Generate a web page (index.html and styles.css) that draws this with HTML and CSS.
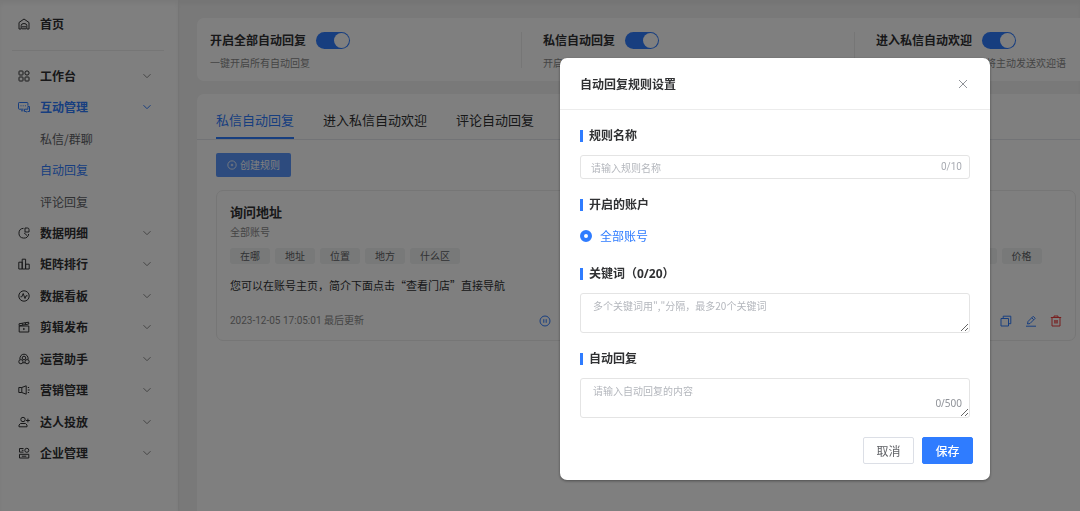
FILE: index.html
```html
<!DOCTYPE html>
<html lang="zh-CN">
<head>
<meta charset="utf-8">
<title>自动回复</title>
<link rel="stylesheet" href="styles.css">
</head>
<body>
<svg class="sprite" aria-hidden="true">
  <symbol id="chevron" viewBox="0 0 10 10"><path d="M1.500 3.200 5 6.700l3.500-3.500"/></symbol>
  <symbol id="pause" viewBox="0 0 12 12"><circle cx="6" cy="6" r="5"/><path d="M4.800 4.200v3.600M7.200 4.200v3.600"/></symbol>
  <symbol id="copy" viewBox="0 0 12 12"><path d="M1 3.500h7.500V11H1zM3.200 3.500V1.200h7.600v7.500H8.500"/></symbol>
  <symbol id="edit" viewBox="0 0 12 12"><path d="M1 11.200h10M2.500 9l.5-2.500 5.200-5.200 2 2L5 8.500zM6.800 2.800l2 2"/></symbol>
  <symbol id="trash" viewBox="0 0 12 12"><path d="M.8 2.500h10.400M4 2.300V1h4v1.300M2 2.500V11h8V2.500M4.800 5v3.500M7.200 5v3.500M6 5v3.500"/></symbol>
</svg>

<div class="app">
  <aside class="sidebar">
    <a class="home" href="#">
      <svg class="icon" viewBox="0 0 12 12"><path d="M1 11V4.500L6 1l5 3.500V11H8.800V7.500a2.800 2 0 0 0-5.600 0V11zM4 8.800h4M4 10.800h4"/></svg>
      首页
    </a>
    <nav class="menu" aria-label="主菜单">
      <button class="item" type="button"><svg class="icon" viewBox="0 0 12 12"><rect x="1" y="1" width="4" height="4" rx=".6"/><rect x="1" y="7" width="4" height="4" rx=".6"/><rect x="7" y="7" width="4" height="4" rx=".6"/><circle cx="9" cy="3" r="2.100"/></svg>工作台<svg class="arrow"><use href="#chevron"/></svg></button>
      <button class="item active" type="button"><svg class="icon" viewBox="0 0 12 12"><path d="M5.500 8.200H1.200a.7.7 0 0 1-.7-.7V2.200a.7.7 0 0 1 .7-.7h8a.7.7 0 0 1 .7.700v2.500M2.500 4.800h1M4.700 4.800h1M6.900 4.800h1M3 9.800h2.500M9.900 5.500h1.600v5H9.800l-.8.800-.8-.8H6.500V8.200h3.400z"/></svg>互动管理<svg class="arrow"><use href="#chevron"/></svg></button>
      <a class="item sub" href="#">私信/群聊</a>
      <a class="item sub active" href="#">自动回复</a>
      <a class="item sub" href="#">评论回复</a>
      <button class="item" type="button"><svg class="icon" viewBox="0 0 12 12"><path d="M5.500 1.300A4.900 4.900 0 1 0 10.700 7M6 5.800 9 8.500M7 1h2.500a1.500 1.500 0 0 1 1.500 1.500V5H7z"/></svg>数据明细<svg class="arrow"><use href="#chevron"/></svg></button>
      <button class="item" type="button"><svg class="icon" viewBox="0 0 12 12"><path d="M.8 4.200h3.400V11H.8zM4.200 1.200h3.400V11H4.200zM7.600 6.200h3.600V11H7.600z"/></svg>矩阵排行<svg class="arrow"><use href="#chevron"/></svg></button>
      <button class="item" type="button"><svg class="icon" viewBox="0 0 12 12"><circle cx="6" cy="6" r="5.200"/><path d="M2.500 6.800h1.300L5.200 3.500l1.800 5 1-2.700h1.500"/></svg>数据看板<svg class="arrow"><use href="#chevron"/></svg></button>
      <button class="item" type="button"><svg class="icon" viewBox="0 0 12 12"><path d="M1.200 5h9.600v6H1.200zM1 2.800l9.600-1.600.2 1.800L1.200 4.800zM4 2.200l1 1.800M7 1.700l1 1.800"/><path d="M5.200 6.800v2.500L7.300 8z" fill="currentColor" stroke="none"/></svg>剪辑发布<svg class="arrow"><use href="#chevron"/></svg></button>
      <button class="item" type="button"><svg class="icon" viewBox="0 0 12 12"><circle cx="2.900" cy="8.700" r="2.100"/><circle cx="9.100" cy="8.700" r="2.100"/><circle cx="6" cy="5" r="1.800"/><path d="M1.800 6.500C1.800 3 3.500 1.200 6 1.200S10.200 3 10.200 6.500M5 9.800h2"/></svg>运营助手<svg class="arrow"><use href="#chevron"/></svg></button>
      <button class="item" type="button"><svg class="icon" viewBox="0 0 12 12"><path d="M.8 3.500h3v5h-3zM3.800 3.500l4.400-1.700v8.400L3.800 8.500M9.800 3.500h1.300M9.800 6h1.900M9.800 8.500h1.300"/></svg>营销管理<svg class="arrow"><use href="#chevron"/></svg></button>
      <button class="item" type="button"><svg class="icon" viewBox="0 0 12 12"><circle cx="5" cy="3.500" r="2.200"/><path d="M1 10.800V9l1.500-1.500h5L9 9v1.800zM8 4.500h3.800M9.900 2.600v3.800"/></svg>达人投放<svg class="arrow"><use href="#chevron"/></svg></button>
      <button class="item" type="button"><svg class="icon" viewBox="0 0 12 12"><path d="M5.500 1.500h-4v3.600h4M5.500 3.300H3.800M1.500 11V7.300h9.300V11zM3.800 9.200h4.500"/><circle cx="8.800" cy="3.300" r="2"/></svg>企业管理<svg class="arrow"><use href="#chevron"/></svg></button>
    </nav>
  </aside>

  <main class="main">
    <section class="switches">
      <div class="option">
        <label class="option-head">开启全部自动回复<input class="switch" type="checkbox" role="switch" checked></label>
        <p>一键开启所有自动回复</p>
      </div>
      <div class="option">
        <label class="option-head">私信自动回复<input class="switch" type="checkbox" role="switch" checked></label>
        <p>开启后，自动回复私信</p>
      </div>
      <div class="option">
        <label class="option-head">进入私信自动欢迎<input class="switch" type="checkbox" role="switch" checked></label>
        <p>开启后，用户进入私信时将主动发送欢迎语</p>
      </div>
    </section>

    <section class="panel">
      <div class="tabs" role="tablist">
        <button class="tab selected" role="tab" aria-selected="true" type="button">私信自动回复</button>
        <button class="tab" role="tab" aria-selected="false" type="button">进入私信自动欢迎</button>
        <button class="tab" role="tab" aria-selected="false" type="button">评论自动回复</button>
      </div>
      <div class="panel-body">
        <button class="create" type="button"><svg class="glyph" viewBox="0 0 12 12"><circle cx="6" cy="6" r="5"/><path d="M6 4.500v3M4.500 6h3"/></svg>创建规则</button>
        <div class="rules">
          <article class="rule">
            <h2>询问地址</h2>
            <p class="account">全部账号</p>
            <ul class="tags"><li>在哪</li><li>地址</li><li>位置</li><li>地方</li><li>什么区</li></ul>
            <p class="reply">您可以在账号主页，简介下面点击“查看门店”直接导航</p>
            <footer class="rule-foot">
              <time>2023-12-05 17:05:01 最后更新</time>
              <button type="button" aria-label="暂停"><svg class="glyph"><use href="#pause"/></svg></button>
              <button type="button" aria-label="复制"><svg class="glyph"><use href="#copy"/></svg></button>
              <button type="button" aria-label="编辑"><svg class="glyph"><use href="#edit"/></svg></button>
              <button class="danger" type="button" aria-label="删除"><svg class="glyph"><use href="#trash"/></svg></button>
            </footer>
          </article>
          <article class="rule">
            <h2>询问价格</h2>
            <p class="account">全部账号</p>
            <ul class="tags"><li>多少钱</li><li>怎么卖</li><li>报价</li><li>费用</li><li>收费</li><li>优惠</li><li>套餐</li><li>价格</li></ul>
            <p class="reply">您可以在账号主页查看价格</p>
            <footer class="rule-foot">
              <time>2023-12-05 17:05:01 最后更新</time>
              <button type="button" aria-label="暂停"><svg class="glyph"><use href="#pause"/></svg></button>
              <button type="button" aria-label="复制"><svg class="glyph"><use href="#copy"/></svg></button>
              <button type="button" aria-label="编辑"><svg class="glyph"><use href="#edit"/></svg></button>
              <button class="danger" type="button" aria-label="删除"><svg class="glyph"><use href="#trash"/></svg></button>
            </footer>
          </article>
        </div>
      </div>
    </section>
  </main>
</div>

<div class="overlay">
  <form class="dialog" role="dialog" aria-modal="true" aria-labelledby="dialog-title">
    <header class="dialog-head">
      <h1 id="dialog-title">自动回复规则设置</h1>
      <button class="close" type="button" aria-label="关闭"><svg viewBox="0 0 10 10"><path d="M1 1l8 8M9 1 1 9"/></svg></button>
    </header>
    <div class="dialog-body">
      <div class="field">
        <label class="title" for="name">规则名称</label>
        <div class="box"><input id="name" type="text" maxlength="10" placeholder="请输入规则名称"><span class="count">0/10</span></div>
      </div>
      <fieldset class="field">
        <legend class="title">开启的账户</legend>
        <label class="choice"><input type="radio" name="account" checked>全部账号</label>
      </fieldset>
      <div class="field">
        <label class="title" for="keywords">关键词（0/20）</label>
        <div class="box"><textarea id="keywords" placeholder="多个关键词用&quot;,&quot;分隔，最多20个关键词"></textarea></div>
      </div>
      <div class="field">
        <label class="title" for="answer">自动回复</label>
        <div class="box"><textarea id="answer" maxlength="500" placeholder="请输入自动回复的内容"></textarea><span class="total">0/500</span></div>
      </div>
    </div>
    <footer class="dialog-foot">
      <button class="btn" type="button">取消</button>
      <button class="btn primary" type="submit">保存</button>
    </footer>
  </form>
</div>
</body>
</html>
```
FILE: styles.css
```css
* { box-sizing: border-box; }

body {
  margin: 0;
  color: #303133;
  font: 12px/16px "Noto Sans CJK SC", sans-serif;
  overflow: hidden;
}

h1, h2, p, ul, fieldset { margin: 0; padding: 0; border: 0; }
ul { list-style: none; }
a { color: inherit; text-decoration: none; }
button, input, textarea { font: inherit; color: inherit; }
button { padding: 0; border: 0; background: none; cursor: pointer; }
svg { fill: none; stroke: currentColor; }
.sprite { position: absolute; width: 0; height: 0; }

.app { display: flex; min-height: 100vh; background: #f3f3f3; box-shadow: inset 0 4px 4px #e9e9e9; }

/* Sidebar */
.sidebar {
  display: flex;
  flex: none;
  flex-direction: column;
  width: 178px;
  padding: 0 14px 42px 12px;
  background: #fff;
  box-shadow: inset 0 4px 4px #f3f3f3, 1px 0 2px #e8e8e8;
}
.home, .item {
  display: flex;
  align-items: center;
  gap: 10px;
  padding: 0 12px 0 6px;
  font-weight: 700;
  text-align: left;
}
.home { height: 51px; padding-bottom: 3px; border-bottom: 1px solid #ececec; }
.menu { display: grid; flex: 1; grid-auto-rows: 1fr; padding-top: 9px; }
.item.sub { padding-left: 28px; color: #606266; font-weight: 400; }
.item.active { color: #2f7cff; }
.icon { flex: none; width: 12px; height: 12px; }
.arrow { width: 10px; height: 10px; margin-left: auto; color: #8a8a8a; }
.active .arrow { color: inherit; }

/* Top switches */
.main { display: flex; flex: 1; flex-direction: column; gap: 13px; min-width: 0; padding: 18px 0 0 19px; }
.switches {
  display: grid;
  grid-template-columns: 333fr 333fr 204fr;
  padding: 13px 0 10px 13px;
  border-radius: 7px 0 0 7px;
  background: #fff;
}
.option { position: relative; white-space: nowrap; }
.option:not(:last-child)::after {
  content: "";
  position: absolute;
  top: 1px;
  right: 21px;
  height: 36px;
  border-right: 1px solid #ececec;
}
.option-head { display: flex; align-items: center; gap: 10px; height: 18px; font-weight: 700; }
.option p { margin-top: 6px; color: #8a8a8a; font-size: 10px; }
.switch {
  display: flex;
  justify-content: flex-end;
  appearance: none;
  width: 34px;
  height: 17px;
  margin: 0;
  padding: 1px;
  border-radius: 9px;
  background: #2f7cff;
}
.switch::before { content: ""; width: 15px; height: 15px; border-radius: 50%; background: #fff; }

/* Rules panel */
.panel { flex: 1; border-radius: 7px 0 0 0; background: #fff; }
.tabs { display: flex; gap: 29px; padding: 0 19px; border-bottom: 1px solid #e4e7ed; }
.tab { height: 45px; padding-top: 8px; border-bottom: 2px solid transparent; font-size: 13px; }
.tab.selected { border-color: #2f7cff; color: #2f7cff; }
.panel-body { padding: 13px 4px 0 19px; }
.create {
  display: flex;
  align-items: center;
  justify-content: center;
  gap: 3px;
  width: 75px;
  height: 24px;
  border-radius: 2px;
  background: #5a96fc;
  color: #fff;
  font-size: 10px;
}
.glyph { display: block; width: 12px; height: 12px; }
.create .glyph { width: 10px; height: 10px; }
.rules { display: grid; grid-template-columns: 1fr 1fr; gap: 13px; margin-top: 13px; }
.rule { padding: 13px 13px 11px; border: 1px solid #ececec; border-radius: 7px; }
.rule h2 { font-size: 13px; font-weight: 700; line-height: 16px; }
.account { margin-top: 4px; color: #8a8a8a; font-size: 10px; }
.tags { display: flex; gap: 5px; margin-top: 8px; }
.tags li { padding: 0 10px; border-radius: 3px; background: #f0f2f2; color: #606266; font-size: 10px; white-space: nowrap; }
.reply { margin-top: 13px; font-size: 11px; }
.rule-foot { display: flex; align-items: center; gap: 13px; margin-top: 20px; color: #2f7cff; }
.rule-foot time { margin-right: auto; color: #8a8a8a; font: 10px/16px Roboto, "Noto Sans CJK SC", sans-serif; }
.danger { color: #f03c3c; }

/* Dialog */
.overlay {
  position: fixed;
  inset: 0;
  display: flex;
  align-items: flex-start;
  justify-content: flex-end;
  padding: 58px 90px 0;
  background: rgba(0, 0, 0, .5);
}
.dialog { width: 430px; border-radius: 7px; background: #fff; box-shadow: 0 1px 3px rgba(0, 0, 0, .4); }
.dialog-head {
  display: flex;
  align-items: center;
  justify-content: space-between;
  height: 52px;
  padding: 0 20px;
  border-bottom: 1px solid #ececec;
}
.dialog-head h1 { font-size: 12px; font-weight: 700; }
.close { padding: 2px; color: #909399; }
.close svg { display: block; width: 10px; height: 10px; }
.dialog-body { display: grid; gap: 18px; padding: 18px 20px 0; }
.field { min-width: 0; }
.title { display: flex; align-items: center; padding: 0; font-family: "Noto Sans", "Noto Sans CJK SC", sans-serif; font-weight: 700; }
.title::before { content: ""; width: 3px; height: 12px; margin-right: 6px; background: #2f7cff; }
.box { position: relative; display: flex; margin-top: 11px; }
.box input, .box textarea {
  width: 100%;
  border: 1px solid #e4e4e4;
  border-radius: 3px;
  outline: 0;
  background: #fff;
  font-size: 10px;
}
.box input { height: 24px; padding: 0 40px 0 10px; }
.box textarea { display: block; height: 40px; padding: 4px 12px; resize: vertical; }
::placeholder { color: #b4b7bd; }
.count, .total { position: absolute; right: 8px; color: #a8abb2; font: 10px/16px Roboto, sans-serif; }
.count { top: 4px; }
.total { bottom: 7px; color: #909399; font-family: "Noto Sans", sans-serif; }
.choice { display: flex; align-items: center; gap: 8px; margin: 15px 0 4px; color: #2f7cff; }
.choice input { appearance: none; width: 12px; height: 12px; margin: 0; border: 4px solid #2f7cff; border-radius: 50%; background: #fff; }
.dialog-foot { display: flex; justify-content: flex-end; gap: 8px; padding: 19px 17px 16px; }
.btn { width: 51px; height: 27px; border: 1px solid #dcdfe6; border-radius: 2px; color: #606266; }
.btn.primary { border-color: #2f7cff; background: #2f7cff; color: #fff; font-weight: 500; }
```
